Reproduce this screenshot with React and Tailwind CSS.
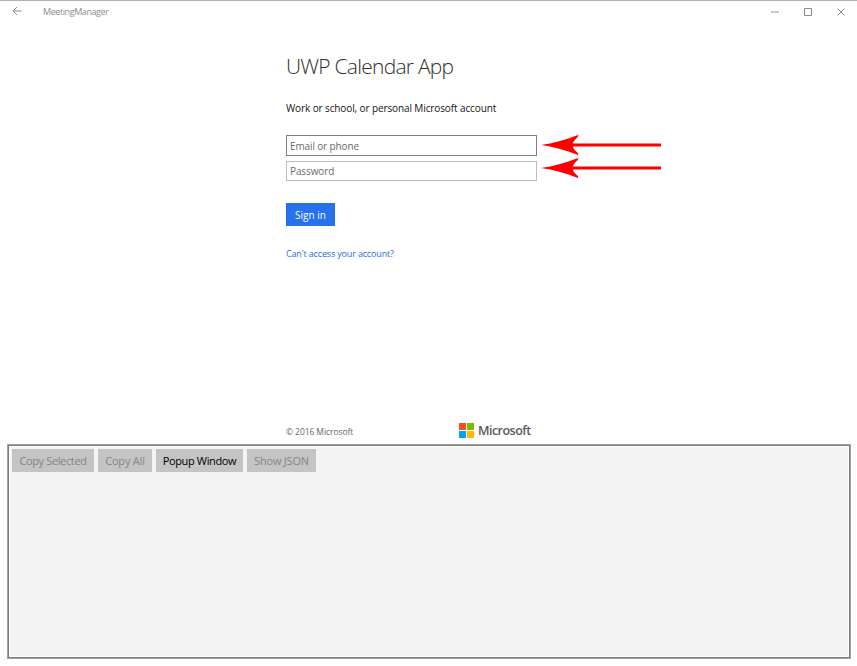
import React from "react";

function Arrow() {
  return (
    <svg width="121" height="22" viewBox="0 0 121 22" className="block">
      <path
        d="M0 11 C12 9.4 24 6.2 37 1 C37.6 1.4 37.3 2.2 36.3 3.4 C33.6 6 32 8 31.8 9.4 H120 V12.4 H31.8 C32 14 33.6 16 36.3 18.6 C37.3 19.8 37.6 20.6 37 21 C24 15.8 12 12.6 0 11 Z"
        fill="#fe0000"
      />
    </svg>
  );
}

function TitleBar() {
  return (
    <header className="flex h-[23px] items-center border-t border-[#b3b3b3] text-[#8c8c8c]">
      <svg width="10" height="10" viewBox="0 0 10 10" fill="none" stroke="#8c8c8c" className="ml-3 -mt-[2px]">
        <path d="M9.5 5H1M5 1L1 5l4 4" />
      </svg>
      <span className="ml-[21px] text-[9px] leading-3 tracking-[-0.42px]">MeetingManager</span>
      <svg width="8" height="8" viewBox="0 0 8 8" fill="none" stroke="#999999" className="ml-auto">
        <path d="M0 4h8" />
      </svg>
      <svg width="8" height="8" viewBox="0 0 8 8" fill="none" stroke="#8c8c8c" className="ml-[25px]">
        <path d="M.5.5h7v7h-7z" />
      </svg>
      <svg width="8" height="8" viewBox="0 0 8 8" fill="none" stroke="#8c8c8c" className="ml-[25px] mr-3">
        <path d="M.5.5l7 7M7.5.5l-7 7" />
      </svg>
    </header>
  );
}

function SignIn() {
  return (
    <main className="ml-[286px] flex h-[421px] flex-col items-start">
      <h1 className="mt-[29px] text-[21px] font-light leading-7 tracking-[-0.75px] text-[#303030]">UWP Calendar App</h1>
      <p className="mt-5 text-[10px] leading-4 tracking-[-0.11px] text-[#141414]">
        Work or school, or personal Microsoft account
      </p>
      <div className="relative mt-[19px] flex h-[21px] w-[251px] items-center border border-[#808080] pl-[3px] text-[10px] leading-4 tracking-[-0.13px] text-[#6b6b6b]">
        <span>Email or phone</span>
        <div className="absolute left-[254px] top-[-2px]"><Arrow /></div>
      </div>
      <div className="relative mt-[5px] flex h-[20px] w-[251px] items-center border border-[#bdbdbd] pl-[3px] text-[10px] leading-4 tracking-[-0.1px] text-[#6b6b6b]">
        <span>Password</span>
        <div className="absolute left-[254px] top-[-5px]"><Arrow /></div>
      </div>
      <button className="mt-[22px] flex h-[23px] w-[49px] items-center justify-center bg-[#2672ec] text-[10px] leading-4 text-white">
        <span>Sign in</span>
      </button>
      <a className="mt-[22px] text-[9px] leading-3 tracking-[-0.16px] text-[#1f6de6]">Can't access your account?</a>
      <div className="mt-auto flex w-[246px] items-center pb-[5px]">
        <span className="mt-[3px] text-[8.5px] leading-3 tracking-[-0.08px] text-[#666666]">© 2016 Microsoft</span>
        <div className="ml-auto grid grid-cols-2 gap-px">
          <i className="size-[7px] bg-[#f25022]" />
          <i className="size-[7px] bg-[#7fba00]" />
          <i className="size-[7px] bg-[#00a4ef]" />
          <i className="size-[7px] bg-[#ffb900]" />
        </div>
        <span className="ml-1 mt-[2px] w-[54px] text-[12.5px] font-semibold leading-4 tracking-[-0.53px] text-[#595959]">Microsoft</span>
      </div>
    </main>
  );
}

function LogPanel() {
  return (
    <section className="ml-[7px] mr-[6px] h-[215px] border border-[#a3a3a3] bg-white">
      <div className="h-full border border-[#7d7d7d] p-px">
        <div className="flex h-full gap-1 bg-[#f4f4f4] pl-[2px] pt-[2px] text-[11px] leading-4 tracking-[-0.36px] text-[#858585]">
          <button className="flex h-[23px] w-[82px] items-center justify-center bg-[#c4c4c4]"><span>Copy Selected</span></button>
          <button className="flex h-[23px] w-[54px] items-center justify-center bg-[#c4c4c4]"><span className="tracking-[-0.2px]">Copy All</span></button>
          <button className="flex h-[23px] w-[87px] items-center justify-center bg-[#c4c4c4] text-black"><span>Popup Window</span></button>
          <button className="flex h-[23px] w-[69px] items-center justify-center bg-[#c4c4c4]"><span className="tracking-[-0.2px]">Show JSON</span></button>
        </div>
      </div>
    </section>
  );
}

export default function App() {
  return (
    <div className="h-[666px] w-[857px] overflow-hidden whitespace-nowrap bg-white font-['Open_Sans','Noto_Sans',sans-serif]">
      <TitleBar />
      <SignIn />
      <LogPanel />
    </div>
  );
}
